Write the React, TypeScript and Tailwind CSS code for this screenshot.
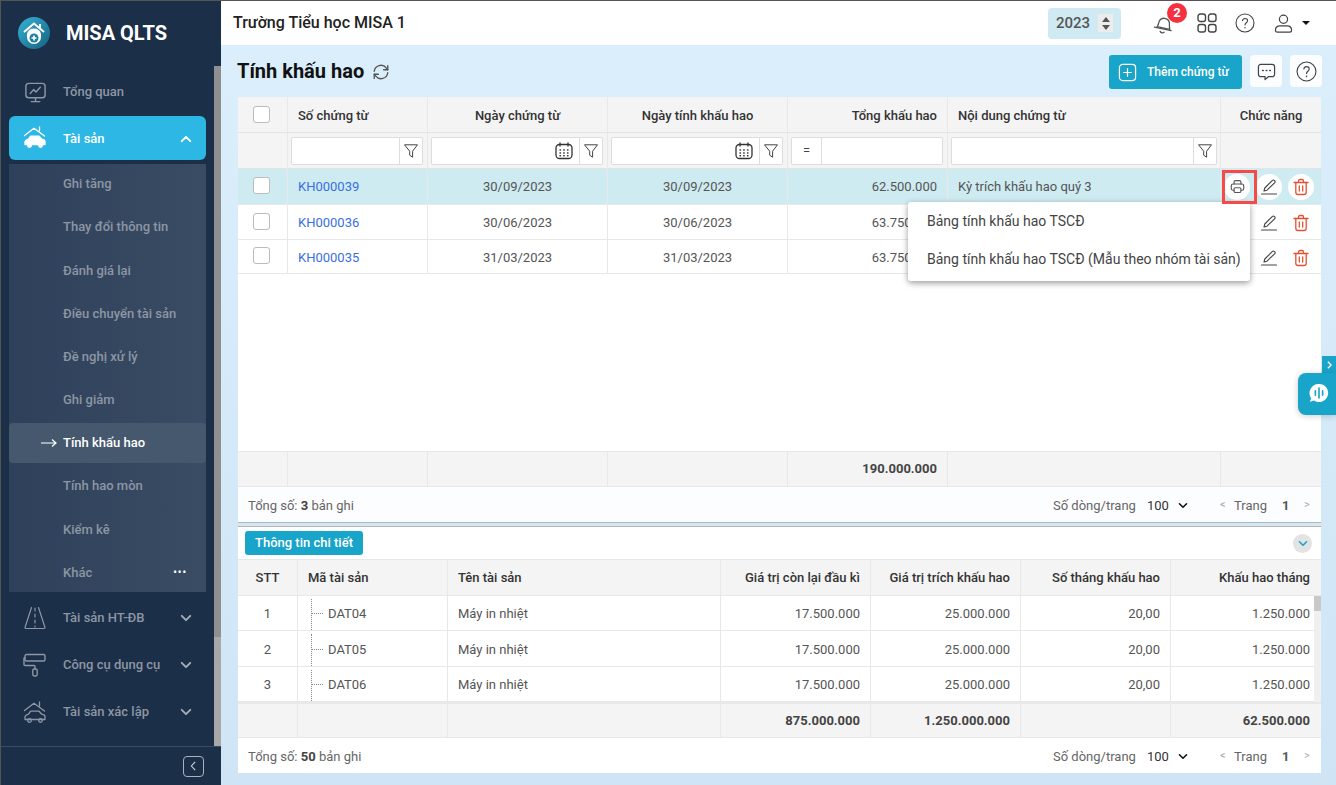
import React from "react";

const F = { fontFamily: "Roboto, 'Liberation Sans', sans-serif" };

type IP = { className?: string };
const S = ({ className, children, w = 24, sw = 1.5 }: IP & { children: React.ReactNode; w?: number; sw?: number }) => (
  <svg viewBox={`0 0 ${w} ${w}`} fill="none" stroke="currentColor" strokeWidth={sw} strokeLinecap="round" strokeLinejoin="round" className={className}>{children}</svg>
);

const Logo = () => (
  <svg viewBox="0 0 32 32" className="w-8 h-8 shrink-0">
    <defs><linearGradient id="lg" x1="0" y1="0" x2="1" y2="1"><stop offset="0" stopColor="#35b4d6" /><stop offset="1" stopColor="#15607f" /></linearGradient></defs>
    <circle cx="16" cy="16" r="16" fill="url(#lg)" />
    <path d="M6 15 L16 6.5 L26 15" fill="none" stroke="#fff" strokeWidth="2" />
    <path d="M22 7v4" stroke="#fff" strokeWidth="2" />
    <path d="M9 17a7.2 7.2 0 0 1 14 0v3a7 7 0 0 1-14 0z" fill="#fff" />
    <circle cx="16" cy="21" r="4.5" fill="#1f7f9f" />
    <path d="M16 18.5v5M13.5 21h5" stroke="#fff" strokeWidth="1.6" />
  </svg>
);
const Monitor = ({ className }: IP) => (
  <S className={className}>
    <rect x="2" y="2.5" width="20" height="15" rx="3" />
    <path d="M12 17.5v4M7.5 21.5h9M6.5 13l3.5-4 2.5 2.5L17 6.5" />
  </S>
);
const HouseCar = ({ className, solid }: IP & { solid?: boolean }) => (
  <svg viewBox="0 0 24 24" fill="none" stroke="currentColor" strokeWidth="1.3" className={className} strokeLinecap="round" strokeLinejoin="round">
    <path d="M1.5 10.5 11 3.2l10.5 7.8M16.5 1.8v4" />
    <path d="M2 17c0-2 2.2-2.6 3.6-3l2-2.8h8.5l2.6 3c1.6.2 3.3.8 3.3 2.6v2.7H2z" fill={solid ? "currentColor" : "none"} />
    <circle cx="6.5" cy="20.5" r="1.8" fill={solid ? "currentColor" : "none"} />
    <circle cx="17.5" cy="20.5" r="1.8" fill={solid ? "currentColor" : "none"} />
  </svg>
);
const Road = ({ className }: IP) => (
  <S className={className} sw={1.2}>
    <path d="M8.500 1.500 2 21.500c0 .6.4 1 1 1h18c.6 0 1-.4 1-1L15.500 1.500" />
    <path d="M12 2v3M12 8v3M12 14v3M12 20v1" />
  </S>
);
const Roller = ({ className }: IP) => (
  <S className={className} sw={1.4}>
    <rect x="2" y="1.500" width="20" height="6.500" rx="1.500" />
    <path d="M2 5H1v6.500c0 .6.4 1 1 1h9c.6 0 1 .4 1 1V16" />
    <rect x="9.800" y="16" width="4.400" height="7" rx="1.400" />
  </S>
);
const Chev = ({ up, className }: IP & { up?: boolean }) => (
  <svg viewBox="0 0 14 9" fill="none" stroke="currentColor" strokeWidth="2.200" strokeLinecap="round" strokeLinejoin="round" className={className}>
    <path d={up ? "M2 7l5-5 5 5" : "M2 2l5 5 5-5"} />
  </svg>
);
const Funnel = () => (
  <svg viewBox="0 0 16 16" fill="none" stroke="#444" strokeWidth="1" strokeLinejoin="round" className="w-4 h-4">
    <path d="M1.500 1.800h13L9.600 8.200v6L6.700 12.200v-4z" />
  </svg>
);
const Cal = () => (
  <svg viewBox="0 0 18 18" className="w-[18px] h-[18px] text-[#333]" fill="none" stroke="currentColor" strokeWidth="1.300" strokeLinecap="round">
    <rect x="1" y="2.500" width="16" height="14" rx="3.500" />
    <path d="M5 1v3M13 1v3" />
    <path d="M5 8h.5M8.700 8h.5M12.500 8h.5M5 11h.5M8.700 11h.5M12.500 11h.5M5 13.800h.5M8.700 13.800h.5M12.500 13.800h.5" strokeWidth="1.400" />
  </svg>
);
const Help = ({ className }: IP) => (
  <S className={className} sw={1.3}>
    <circle cx="12" cy="12" r="10.800" />
    <path d="M9 9.200c.2-1.700 1.500-2.700 3.100-2.700 1.700 0 3 1.100 3 2.700 0 2.500-3.100 2.500-3.100 5.100" />
    <path d="M12 17.500v.2" strokeWidth="1.700" />
  </S>
);
const Printer = () => (
  <S className="w-[15px] h-[15px] text-[#555]" sw={1.800}>
    <path d="M6.500 8V5a2.500 2.500 0 0 1 2.500-2.500h6A2.500 2.500 0 0 1 17.500 5v3" />
    <path d="M6.500 18H5a3 3 0 0 1-3-3v-4a3 3 0 0 1 3-3h14a3 3 0 0 1 3 3v4a3 3 0 0 1-3 3h-1.500" />
    <rect x="6.500" y="14" width="11" height="7.500" rx="2" />
  </S>
);
const Pencil = () => (
  <svg viewBox="0 0 18 18" fill="none" stroke="#444" strokeWidth="1.100" strokeLinecap="round" strokeLinejoin="round" className="w-[18px] h-[18px]">
    <path d="M4 13l.8-3L12.500 2.300a1.200 1.200 0 0 1 1.700 0l.6.6a1.200 1.200 0 0 1 0 1.700L7 12.200z" />
    <path d="M1.500 16h15" />
  </svg>
);
const Trash = () => (
  <svg viewBox="0 0 18 18" fill="none" stroke="#e2512f" strokeWidth="1.300" strokeLinecap="round" strokeLinejoin="round" className="w-[18px] h-[18px]">
    <path d="M2 4.500h14M6.500 4.500V3a1.500 1.500 0 0 1 1.500-1.500h2A1.500 1.500 0 0 1 11.500 3v1.500" />
    <path d="M3.800 4.500v9.700a2.300 2.300 0 0 0 2.300 2.300h5.800a2.300 2.300 0 0 0 2.300-2.300V4.500" />
    <path d="M7.300 8v5M10.700 8v5" />
  </svg>
);

const subItems = ["Ghi tăng", "Thay đổi thông tin", "Đánh giá lại", "Điều chuyển tài sản", "Đề nghị xử lý", "Ghi giảm", "Tính khấu hao", "Tính hao mòn", "Kiểm kê", "Khác"];

const Sidebar = () => (
  <aside className="w-[220px] shrink-0 bg-[#1c2f48] flex flex-col text-[13px] font-medium text-[#8c96a4]">
    <div className="h-[65px] shrink-0 pt-[16px] pl-[17px] flex items-start gap-[16px]">
      <Logo />
      <span className="text-[20px] leading-[32px] font-bold text-white">MISA QLTS</span>
    </div>
    <div className="flex-1 flex min-h-0">
      <nav className="w-[213px] shrink-0 pl-2 pr-[8px]">
        <div className="h-[47px] pt-[5px] flex items-center">
          <Monitor className="w-[23px] h-[23px] ml-[15px] text-[#8c96a4]" />
          <span className="ml-[16px]">Tổng quan</span>
        </div>
        <div className="h-11 mt-[3px] pt-[2px] bg-[#2cb7e4] rounded-md flex items-center text-white">
          <HouseCar solid className="w-[24px] h-[24px] ml-[14px] -mt-1" />
          <span className="ml-[16px] flex-1">Tài sản</span>
          <Chev up className="w-3 h-2 mr-[14px]" />
        </div>
        <div className="mt-1 h-[428px] pt-[0.5px] bg-gradient-to-r from-[#2f415a] to-[#3a4c64] flex flex-col justify-center">
          {subItems.map((t) => {
            const active = t === "Tính khấu hao";
            return (
              <div key={t} className="h-[43.2px] shrink-0 flex items-center">
                <div className={`h-10 w-full flex items-center rounded-sm ${active ? "bg-[#46586e] text-white" : ""}`}>
                  {active ? (
                    <svg viewBox="0 0 16 10" className="w-4 h-[10px] ml-[32px] mr-[6px] text-white" fill="none" stroke="currentColor" strokeWidth="1.200"><path d="M0 5h15M11 1.500 15 5l-4 3.500" /></svg>
                  ) : (
                    <span className="w-[54px]" />
                  )}
                  <span className="flex-1">{t}</span>
                  {t === "Khác" && <span className="mr-[19px] text-white text-[10px] leading-none tracking-[1px] font-bold">•••</span>}
                </div>
              </div>
            );
          })}
        </div>
        <div className="mt-[2px]">
          {[
            ["Tài sản HT-ĐB", <Road key="r" className="w-[24px] h-[24px] ml-[14px] text-[#8c96a4]" />],
            ["Công cụ dụng cụ", <Roller key="p" className="w-[24px] h-[24px] ml-[14px] text-[#8c96a4]" />],
            ["Tài sản xác lập", <HouseCar key="h" className="w-[24px] h-[24px] ml-[14px] text-[#8c96a4]" />],
          ].map(([t, ic], i) => (
            <div key={i} className="h-[47px] flex items-center">
              {ic}
              <span className="ml-[16px] flex-1">{t}</span>
              <Chev className="w-3 h-2 mr-[14px] text-[#a4adb8]" />
            </div>
          ))}
        </div>
      </nav>
      <div className="w-[7px] flex flex-col">
        <div className="h-[571px] bg-[#8f8f8f]" />
        <div className="flex-1 bg-[#a8a8a8]" />
      </div>
    </div>
    <div className="h-[39px] shrink-0 border-t border-[#3a4a60] flex items-center justify-end pr-[17px]">
      <div className="w-[21px] h-[21px] rounded-[4px] border border-[#a9b1bc] flex items-center justify-center text-[#cfd4da]">
        <svg viewBox="0 0 8 12" className="w-[7px] h-[10px]" fill="none" stroke="currentColor" strokeWidth="1.300"><path d="M6 1 1.500 6 6 11" /></svg>
      </div>
    </div>
  </aside>
);

const Header = () => (
  <header className="h-11 shrink-0 bg-white flex items-center pl-[12px] pr-[26px]">
    <span className="flex-1 text-[16px] text-[#222] font-medium">Trường Tiểu học MISA 1</span>
    <div className="w-[73px] h-[31px] rounded bg-[#cfeaf2] flex items-center pl-2 mr-[31px]">
      <span className="text-[15px] font-medium text-[#555] w-[42px]">2023</span>
      <div className="w-[15px] h-[18px] bg-[#ececec] flex flex-col items-center justify-center gap-[3px]">
        <span className="w-0 h-0 border-x-[4px] border-x-transparent border-b-[5px] border-b-[#555]" />
        <span className="w-0 h-0 border-x-[4px] border-x-transparent border-t-[5px] border-t-[#555]" />
      </div>
    </div>
    <div className="relative w-6 h-6 mr-[21px]">
      <svg viewBox="0 0 24 24" fill="none" stroke="#555" strokeWidth="1.300" strokeLinejoin="round" strokeLinecap="round" className="w-6 h-6 rotate-[12deg]">
        <path d="M6 17c1-1.500 1-3 1-6a5.500 5.500 0 0 1 10 -1c.8 2 .8 5 2 7z" />
        <path d="M3.500 18h17M10 21a2.500 2.500 0 0 0 4 0" />
      </svg>
      <span className="absolute -top-[8px] left-[15px] w-5 h-5 rounded-full bg-[#f5303f] text-white text-[13px] font-bold flex items-center justify-center">2</span>
    </div>
    <svg viewBox="0 0 20 20" fill="none" stroke="#444" strokeWidth="1.400" className="w-[20px] h-[20px] mr-[18px]">
      <rect x="1" y="1" width="7.500" height="7.500" rx="2.300" /><rect x="11.500" y="1" width="7.500" height="7.500" rx="2.300" />
      <rect x="1" y="11.500" width="7.500" height="7.500" rx="2.300" /><rect x="11.500" y="11.500" width="7.500" height="7.500" rx="2.300" />
    </svg>
    <Help className="w-5 h-5 text-[#444] mr-[19px]" />
    <svg viewBox="0 0 20 20" fill="none" stroke="#444" strokeWidth="1.300" className="w-[19px] h-[19px]">
      <circle cx="10" cy="5.500" r="4.300" />
      <path d="M1.500 17c0-3 2.500-4.500 5-4.500h7c2.500 0 5 1.500 5 4.500 0 1.200-.8 2-2 2h-13c-1.200 0-2-.8-2-2z" />
    </svg>
    <span className="ml-[9px] w-0 h-0 border-x-[4px] border-x-transparent border-t-[4px] border-t-[#111]" />
  </header>
);

const COLS = "grid-cols-[49px_140px_180px_180px_160px_273px_1fr]";
const DCOLS = "grid-cols-[59px_150px_273px_150px_150px_150px_1fr]";
const CB = () => <span className="block w-[17px] h-[17px] rounded-[3px] border border-[#bcbcbc] bg-white" />;

const FilterBtn = () => (
  <span className="w-[23px] shrink-0 h-full border-l border-[#ddd] flex items-center justify-center"><Funnel /></span>
);

const cell = "border-l border-[#e8e8e8] flex items-center";
const down = "pt-[2px]";

const rows = [
  { id: "KH000039", d: "30/09/2023", v: "62.500.000", n: "Kỳ trích khấu hao quý 3", h: "h-9", bg: "bg-[#ceebf1]", sh: "" },
  { id: "KH000036", d: "30/06/2023", v: "63.750.000", n: "", h: "h-[35px]", bg: "bg-white", sh: down },
  { id: "KH000035", d: "31/03/2023", v: "63.750.000", n: "", h: "h-[34px]", bg: "bg-white", sh: down },
];

const Pager = ({ children, cls }: { children: React.ReactNode; cls: string }) => (
  <div className={`flex items-center text-[13px] text-[#666] shrink-0 pt-[2px] ${cls}`}>
    <span className="ml-[10px] flex-1">{children}</span>
    <span className="w-[94px]">Số dòng/trang</span>
    <span className="text-[#333] w-[31px]">100</span>
    <Chev className="w-[10px] h-[7px] text-[#111]" />
    <span className="ml-[32px] w-[14px] text-[#aaa] text-[11px]">&lt;</span>
    <span className="w-[48px]">Trang</span>
    <span className="font-bold text-[#555] w-[22px]">1</span>
    <span className="text-[#aaa] text-[11px] w-[17px]">&gt;</span>
  </div>
);

const TopTable = () => (
  <section className="relative h-[426px] shrink-0 bg-white flex flex-col border-b border-[#b5b5b5] text-[13px] text-[#555]">
    <div className={`grid ${COLS} h-9 bg-[#f4f4f4] border-b border-[#e4e4e4] font-medium text-[#333]`}>
      <div className="flex items-center pl-[15px]"><CB /></div>
      <div className={`${cell} ${down} pl-[10px]`}>Số chứng từ</div>
      <div className={`${cell} ${down} justify-center`}>Ngày chứng từ</div>
      <div className={`${cell} ${down} justify-center`}>Ngày tính khấu hao</div>
      <div className={`${cell} ${down} justify-end pr-[10px]`}>Tổng khấu hao</div>
      <div className={`${cell} ${down} pl-[10px]`}>Nội dung chứng từ</div>
      <div className={`${cell} ${down} justify-center`}>Chức năng</div>
    </div>
    <div className={`grid ${COLS} h-9 bg-[#f4f4f4] border-b border-[#e4e4e4]`}>
      <div />
      {[0, 1, 2].map((i) => (
        <div key={i} className={`${cell} pl-[3px]`}>
          <div className={`${i === 0 ? "w-[132px]" : "w-[172px]"} h-7 bg-white border border-[#ddd] rounded-[2px] flex items-center justify-end`}>
            {i > 0 && <span className="mr-[6px]"><Cal /></span>}
            <FilterBtn />
          </div>
        </div>
      ))}
      <div className={`${cell} pl-[3px]`}>
        <div className="w-[152px] h-7 bg-white border border-[#ddd] rounded-[2px] flex items-center">
          <span className="w-[30px] h-full border-r border-[#ddd] flex items-center justify-center text-[#444]">=</span>
        </div>
      </div>
      <div className={`${cell} pl-[3px]`}>
        <div className="w-[266px] h-7 bg-white border border-[#ddd] rounded-[2px] flex items-center justify-end"><FilterBtn /></div>
      </div>
      <div className={cell} />
    </div>
    {rows.map((r, i) => (
      <div key={r.id} className={`grid ${COLS} ${r.h} ${r.bg} border-b border-[#e8e8e8]`}>
        <div className="flex items-center pl-[15px] pb-[2px]"><CB /></div>
        <div className={`${cell} ${r.sh} pl-[10px] text-[#3a6fe0]`}>{r.id}</div>
        <div className={`${cell} ${r.sh} justify-center`}>{r.d}</div>
        <div className={`${cell} ${r.sh} justify-center`}>{r.d}</div>
        <div className={`${cell} ${r.sh} justify-end pr-[10px]`}>{r.v}</div>
        <div className={`${cell} ${r.sh} pl-[10px]`}>{r.n}</div>
        <div className={`${cell} ${r.sh} pl-[3px] gap-[6px]`}>
          <span className={`w-[26px] h-[26px] rounded-full flex items-center justify-center ${i === 0 ? "bg-white" : ""}`}><Printer /></span>
          <span className={`w-[26px] h-[26px] rounded-full flex items-center justify-center ${i === 0 ? "bg-white" : ""}`}><Pencil /></span>
          <span className={`w-[26px] h-[26px] rounded-full flex items-center justify-center ${i === 0 ? "bg-white" : ""}`}><Trash /></span>
        </div>
      </div>
    ))}
    <div className="flex-1" />
    <div className={`grid ${COLS} h-9 shrink-0 bg-[#f4f4f4] border-y border-[#e8e8e8] font-bold text-[#444]`}>
      <div /><div className={cell} /><div className={cell} /><div className={cell} />
      <div className={`${cell} justify-end pr-[10px]`}>190.000.000</div>
      <div className={cell} /><div className={cell} />
    </div>
    <Pager cls="h-[35px] bg-[#fcfdfe]">Tổng số: <b className="text-[#444]">3</b> bản ghi</Pager>

    <div className="absolute left-[670px] top-[105px] w-[342px] h-[79px] bg-white rounded-[3px] shadow-[0_2px_6px_rgba(0,0,0,0.4)] text-[#444] text-[14px] pl-[19px]">
      <div className="h-[38px] flex items-center">Bảng tính khấu hao TSCĐ</div>
      <div className="h-[39px] flex items-center whitespace-nowrap">Bảng tính khấu hao TSCĐ (Mẫu theo nhóm tài sản)</div>
    </div>
    <span className="absolute left-[984px] top-[73px] w-[35px] h-[34px] border-[3px] border-[#f44a4a]" />
  </section>
);

const dRows = [["1", "DAT04", "h-[35px]"], ["2", "DAT05", "h-9"], ["3", "DAT06", "h-[35px]"]];

const DetailTable = () => (
  <section className="mt-[3px] flex-1 bg-white border-t border-[#b5b5b5] flex flex-col text-[13px] text-[#555]">
    <div className="h-8 shrink-0 flex items-center pl-[7px] pr-[9px] justify-between">
      <span className="h-6 px-[10px] rounded-[3px] bg-[#19a4c9] text-white font-medium flex items-center">Thông tin chi tiết</span>
      <span className="w-[19px] h-[19px] rounded-full bg-[#e3e3e3] flex items-center justify-center text-[#19a4c9]"><Chev className="w-[10px] h-[7px]" /></span>
    </div>
    <div className={`grid ${DCOLS} h-[37px] shrink-0 bg-[#f4f4f4] border-y border-[#e8e8e8] font-medium text-[#333]`}>
      <div className="flex items-center justify-center">STT</div>
      <div className={`${cell} pl-[10px]`}>Mã tài sản</div>
      <div className={`${cell} pl-[10px]`}>Tên tài sản</div>
      <div className={`${cell} justify-end pr-[10px]`}>Giá trị còn lại đầu kì</div>
      <div className={`${cell} justify-end pr-[10px]`}>Giá trị trích khấu hao</div>
      <div className={`${cell} justify-end pr-[10px]`}>Số tháng khấu hao</div>
      <div className={`${cell} justify-end pr-[11px]`}>Khấu hao tháng</div>
    </div>
    <div className="relative shrink-0">
      {dRows.map(([n, c, h]) => (
        <div key={n} className={`grid ${DCOLS} ${h} border-b border-[#e8e8e8]`}>
          <div className={`flex items-center justify-center ${down}`}>{n}</div>
          <div className={`${cell} pl-[13px]`}>
            <span className="relative self-stretch w-[13px] mr-[4px]">
              <span className="absolute left-0 top-[3px] bottom-0 border-l border-dotted border-[#888]" />
              <span className="absolute left-0 w-[12px] top-1/2 border-t border-dotted border-[#888]" />
            </span>
            <span className={down}>{c}</span>
          </div>
          <div className={`${cell} ${down} pl-[10px]`}>Máy in nhiệt</div>
          <div className={`${cell} ${down} justify-end pr-[10px]`}>17.500.000</div>
          <div className={`${cell} ${down} justify-end pr-[10px]`}>25.000.000</div>
          <div className={`${cell} ${down} justify-end pr-[10px]`}>20,00</div>
          <div className={`${cell} ${down} justify-end pr-[11px]`}>1.250.000</div>
        </div>
      ))}
      <div className="absolute right-0 top-0 bottom-0 w-[7px] bg-[#f0f0f0]"><div className="h-[15px] bg-[#c9c9c9]" /></div>
    </div>
    <div className={`grid ${DCOLS} h-9 shrink-0 bg-[#f4f4f4] border-t-2 border-b border-[#e8e8e8] font-bold text-[#444]`}>
      <div /><div className={cell} /><div className={cell} />
      <div className={`${cell} justify-end pr-[10px]`}>875.000.000</div>
      <div className={`${cell} justify-end pr-[10px]`}>1.250.000.000</div>
      <div className={cell} />
      <div className={`${cell} justify-end pr-[11px]`}>62.500.000</div>
    </div>
    <Pager cls="flex-1 bg-white">Tổng số: <b className="text-[#444]">50</b> bản ghi</Pager>
  </section>
);

export default function App() {
  return (
    <div style={F} className="relative w-[1336px] h-[785px] overflow-hidden flex border-t border-l border-[#555]">
      <Sidebar />
      <main className="flex-1 min-w-0 flex flex-col">
        <Header />
        <div className="flex-1 min-h-0 pl-[17px] pr-[15px] pb-[12px] flex flex-col bg-gradient-to-b from-[#dbeefc] to-[#cfe5f5]">
          <div className="h-[52px] shrink-0 flex items-start -mr-px">
            <div className="h-[52px] flex-1 flex items-center -ml-px">
              <h1 className="text-[20px] font-bold text-[#111]">Tính khấu hao</h1>
              <svg viewBox="0 0 24 24" fill="none" stroke="#555" strokeWidth="1.800" strokeLinecap="round" strokeLinejoin="round" className="w-[18px] h-[18px] ml-[8px] mt-[2px]">
                <path d="M3 11a9 9 0 0 1 16-4.500L21 9" /><path d="M21 3.500V9h-5.500" />
                <path d="M21 13a9 9 0 0 1-16 4.500L3 15" /><path d="M3 20.500V15h5.500" />
              </svg>
            </div>
            <div className="mt-[10px] w-[133px] h-[34px] rounded-[3px] bg-[#19a4c9] text-white text-[12px] font-medium flex items-center pl-[9px] gap-[10px]">
              <svg viewBox="0 0 20 20" fill="none" stroke="#fff" strokeWidth="1.300" strokeLinecap="round" className="w-[19px] h-[19px]">
                <rect x="1.500" y="1.500" width="17" height="17" rx="3.500" /><path d="M10 6v8M6 10h8" />
              </svg>
              Thêm chứng từ
            </div>
            <div className="mt-[10px] ml-2 w-8 h-8 rounded bg-[#fbfdfe] flex items-center justify-center">
              <svg viewBox="0 0 20 20" fill="none" stroke="#444" strokeWidth="1.300" strokeLinejoin="round" className="w-[19px] h-[19px]">
                <path d="M4 2.500h12a2.500 2.500 0 0 1 2.500 2.500v8a2.500 2.500 0 0 1-2.500 2.500h-4L8.500 18.500v-3H4A2.500 2.500 0 0 1 1.500 13V5A2.500 2.500 0 0 1 4 2.500z" />
                <path d="M6 9h.6M9.700 9h.6M13.400 9h.6" strokeWidth="1.600" strokeLinecap="round" />
              </svg>
            </div>
            <div className="mt-[10px] ml-2 w-8 h-8 rounded bg-[#fbfdfe] flex items-center justify-center"><Help className="w-[21px] h-[21px] text-[#444]" /></div>
          </div>
          <TopTable />
          <DetailTable />
        </div>
      </main>

      <span className="absolute right-0 top-[355px] w-[14px] h-[17px] bg-[#19a4c9] flex items-center justify-center">
        <svg viewBox="0 0 6 10" className="w-[5px] h-[8px]" fill="none" stroke="#fff" strokeWidth="1.800"><path d="M1 1l4 4-4 4" /></svg>
      </span>
      <div className="absolute right-0 top-[372px] w-[38px] h-[42px] rounded-l-lg bg-[#19a4c9] shadow-[0_1px_6px_rgba(0,0,0,0.2)] flex items-center justify-center pl-[3px] pb-[2px]">
        <svg viewBox="0 0 22 22" className="w-[20px] h-[20px]">
          <path d="M11 1a10 10 0 1 1-5.500 18.300L1 20.500l1.400-3.800A10 10 0 0 1 11 1z" fill="#fff" />
          <path d="M7 8.500v5M11 5.500v11M15 8.500v5" stroke="#19a4c9" strokeWidth="1.800" strokeLinecap="round" />
        </svg>
      </div>
    </div>
  );
}
